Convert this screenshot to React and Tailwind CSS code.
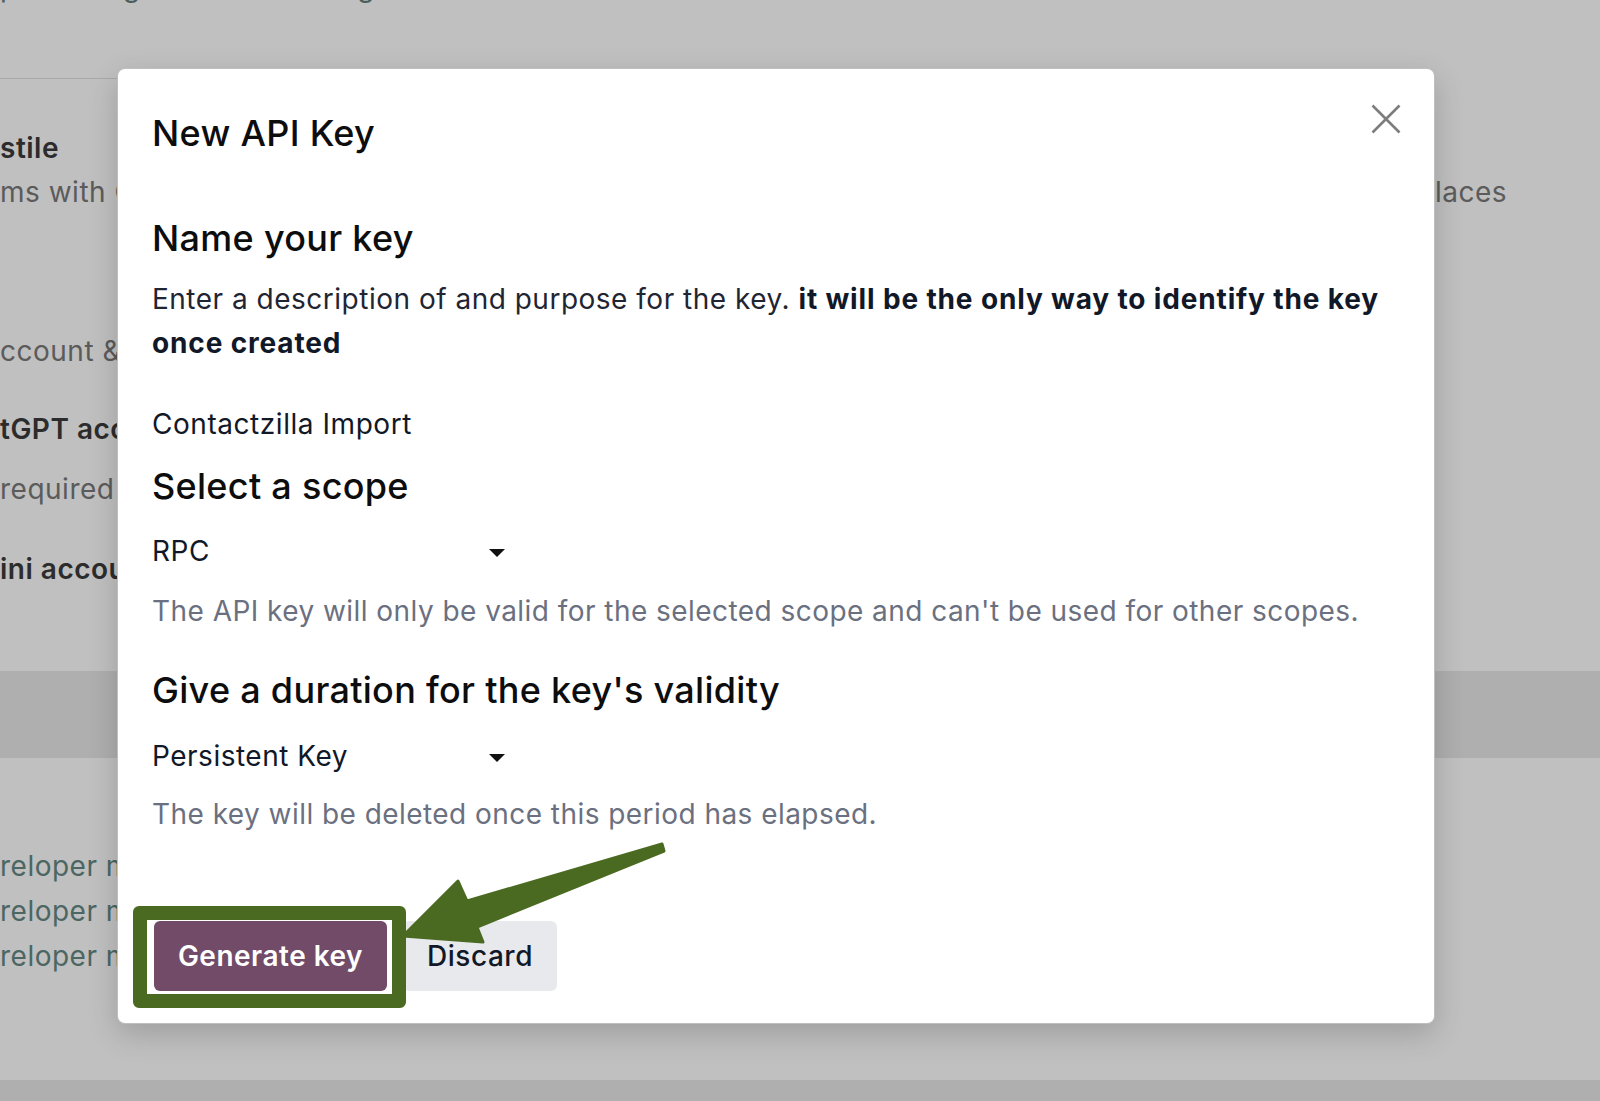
import React from "react";

const font = { fontFamily: "Inter, 'Noto Sans', 'Liberation Sans', sans-serif" };

function Background() {
  return (
    <div className="flex flex-col text-[28px] leading-[44px] tracking-[0.5px] whitespace-nowrap">
      <div className="-mt-[35px] h-[44px] text-[#4b5e5c]">pixel integrations with images</div>
      <div className="mt-[69px] h-px w-[700px] bg-[#a9a9a9]" />
      <div className="mt-[47px] h-[44px] font-semibold text-[#2c2c2c]">stile</div>
      <div className="h-[44px] grid grid-cols-[1435px_1fr] text-[#5b5b5b]">
        <div className="overflow-hidden">ms with Cloudflare Turnstile</div>
        <div>laces</div>
      </div>
      <div className="mt-[115px] h-[44px] text-[#5b5b5b]">ccount &amp; sign in with Google</div>
      <div className="mt-[34px] h-[44px] font-semibold text-[#2c2c2c]">tGPT account</div>
      <div className="mt-[16px] h-[44px] text-[#5b5b5b]">required for AI features</div>
      <div className="mt-[36px] h-[44px] font-semibold text-[#2c2c2c]">ini account</div>
      <div className="mt-[80px] h-[87px] w-full bg-[#afafaf]" />
      <div className="mt-[86px] h-[45px] text-[#4b6663]">reloper mode</div>
      <div className="h-[45px] text-[#4b6663]">reloper mode (with assets)</div>
      <div className="h-[45px] text-[#4b6663]">reloper mode (with tests assets)</div>
      <div className="mt-[101px] h-[21px] w-full bg-[#afafaf]" />
    </div>
  );
}

function Caret() {
  return (
    <span className="mt-[4px] block h-0 w-0 border-l-[8px] border-r-[8px] border-t-[8px] border-l-transparent border-r-transparent border-t-[#111]" />
  );
}

function Modal() {
  return (
    <div className="absolute left-[117px] top-[68px] w-[1318px] rounded-[8px] border border-black/25 bg-white pb-[32px] pl-[34px] pr-[33px] pt-[42px] shadow-[0_10px_30px_rgba(0,0,0,0.18)]">
      <div className="flex items-start justify-between">
        <h1 className="h-[44px] text-[36px] font-medium leading-[44px] tracking-[0.3px] text-[#0d0d0d]">New API Key</h1>
        <button className="-mt-[7px] h-[30px] w-[30px]">
          <svg viewBox="0 0 30 30" width="30" height="30" fill="none" stroke="#7d7d7d" strokeWidth="2.6">
            <path d="M1.5 1.5 L28.5 28.5 M28.5 1.5 L1.5 28.5" />
          </svg>
        </button>
      </div>
      <h2 className="mt-[61px] h-[44px] text-[36px] font-medium leading-[44px] tracking-[0.3px] text-[#0d0d0d]">Name your key</h2>
      <p className="mt-[17px] text-[28px] leading-[44px] tracking-[0.5px] text-[#1f2533]">
        Enter a description of and purpose for the key.{" "}
        <b className="font-bold tracking-[0.85px] text-[#111827]">it will be the only way to identify the key once created</b>
      </p>
      <div className="mt-[37px] h-[44px] text-[28px] leading-[44px] tracking-[0.55px] text-[#111827]">Contactzilla Import</div>
      <h2 className="mt-[18px] h-[44px] text-[36px] font-medium leading-[44px] tracking-[0.3px] text-[#0d0d0d]">Select a scope</h2>
      <div className="mt-[21px] flex h-[44px] w-[353px] items-center justify-between text-[28px] leading-[44px] tracking-[0.5px] text-[#111827]">
        <span>RPC</span>
        <Caret />
      </div>
      <div className="mt-[16px] h-[44px] text-[28px] leading-[44px] tracking-[0.45px] text-[#6b7080]">
        The API key will only be valid for the selected scope and can't be used for other scopes.
      </div>
      <h2 className="mt-[35px] h-[44px] text-[36px] font-medium leading-[44px] tracking-[0.3px] text-[#0d0d0d]">Give a duration for the key's validity</h2>
      <div className="mt-[22px] flex h-[44px] w-[353px] items-center justify-between text-[28px] leading-[44px] tracking-[0.5px] text-[#111827]">
        <span>Persistent Key</span>
        <Caret />
      </div>
      <div className="mt-[14px] h-[44px] text-[28px] leading-[44px] tracking-[0.45px] text-[#6b7080]">
        The key will be deleted once this period has elapsed.
      </div>
      <div className="mt-[85px] flex items-center gap-[16px] pl-[2px]">
        <div className="relative">
          <button className="h-[70px] w-[233px] rounded-[6px] bg-[#714b67] text-[28px] font-semibold tracking-[0.5px] text-white">Generate key</button>
          <div className="absolute -bottom-[17px] -left-[21px] -right-[19px] -top-[15px] z-10 rounded-[6px] border-[14px] border-[#4b6a21]" />
        </div>
        <button className="h-[70px] w-[154px] rounded-[6px] bg-[#e7e9ed] text-[28px] font-medium tracking-[0.55px] text-[#111827]">Discard</button>
      </div>
    </div>
  );
}

export default function App() {
  return (
    <div style={font} className="relative h-[1101px] w-[1600px] overflow-hidden bg-[#c0c0c0]">
      <Background />
      <Modal />
      <svg className="pointer-events-none absolute left-0 top-0" width="1600" height="1101" viewBox="0 0 1600 1101">
        <polygon
          points="403,936 458,881 467,901 662,844 664,851 477,927 483,942"
          fill="#4b6a21"
          stroke="#4b6a21"
          strokeWidth="3"
          strokeLinejoin="round"
        />
      </svg>
    </div>
  );
}
